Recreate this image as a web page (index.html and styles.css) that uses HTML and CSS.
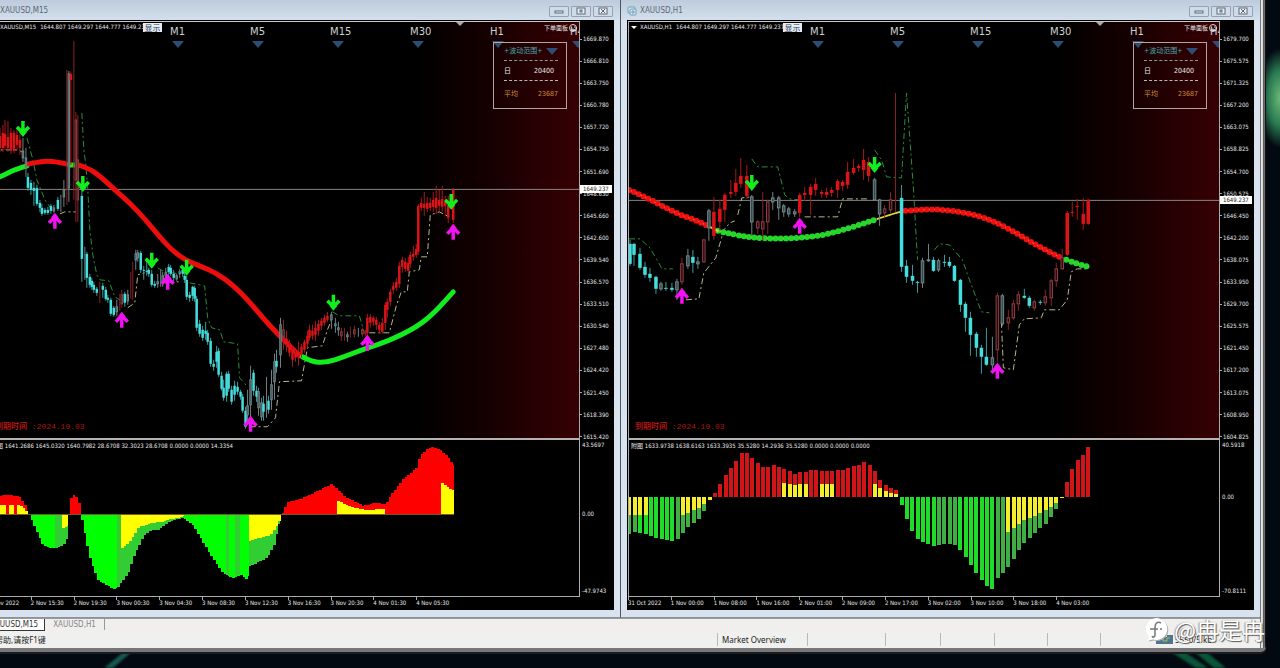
FILE: index.html
```html
<!DOCTYPE html>
<html lang="zh">
<head>
    <meta charset="UTF-8">
    <meta name="viewport" content="width=device-width, initial-scale=1.0">
    <title>XAUUSD</title>
    <link rel="stylesheet" href="styles.css">
</head>
<body>
    <svg class="streaks" viewBox="0 0 1280 18" preserveAspectRatio="none">
        <path d="M104 18L126 0h8L113 18z" fill="#17574f"/>
        <path d="M1168 0h14l26 18h-12zM1192 0h12l22 18h-12z" fill="#0a5538"/>
    </svg>
    <main class="terminal">
        <div class="workspace">
            <section class="window">
                <header class="titlebar">
                    <svg class="doc" viewBox="0 0 10 10"><rect x="1" y="1" width="7" height="6" rx="1"/><rect x="3" y="3" width="6" height="6" rx="1"/><path d="M4 6h4M6 4v4"/></svg>
                    <h2>XAUUSD,M15</h2>
                    <button aria-label="Minimize"><svg viewBox="0 0 10 8"><rect x="1" y="4" width="8" height="2"/></svg></button>
                    <button aria-label="Restore"><svg viewBox="0 0 10 8"><rect x="1" y="1" width="8" height="6"/><rect x="4" y="3" width="2" height="2"/></svg></button>
                    <button aria-label="Close"><svg viewBox="0 0 10 8"><rect x="1" y="1" width="8" height="6"/><path d="M3 2l4 4M7 2l-4 4"/></svg></button>
                </header>
                <div class="chart">
                    <div class="pane main">
                        <svg class="plot" id="m15" viewBox="-11 22 591 416" preserveAspectRatio="none"></svg>
                        <div class="quote"><i></i><span>XAUUSD,M15</span><span>1644.807 1649.297 1644.777 1649.237</span></div>
                        <button class="show">显示</button>
                        <div class="frames"><span>M1</span><span>M5</span><span>M15</span><span>M30</span><span>H1</span><span>H4</span></div>
                        <div class="shift"></div>
                        <div class="order">下单面板<svg viewBox="0 0 8 8"><circle cx="4" cy="4" r="3.5"/><path d="M2 3h1M5 3h1M2 6l2-1 2 1"/></svg></div>
                        <div class="range">
                            <p class="range-head">+波动范围+<b></b></p>
                            <p class="day"><span>日</span><span>20400</span></p>
                            <p class="avg"><span>平均</span><span>23687</span></p>
                        </div>
                        <p class="expire"><b>到期时间</b> :2024.10.03</p>
                    </div>
                    <div class="scale">
                        <span>1669.870</span><span>1666.810</span><span>1663.750</span><span>1660.780</span><span>1657.720</span><span>1654.750</span><span>1651.690</span><span>1648.630</span><span>1645.660</span><span>1642.600</span><span>1639.540</span><span>1636.570</span><span>1633.510</span><span>1630.540</span><span>1627.480</span><span>1624.420</span><span>1621.450</span><span>1618.390</span><span>1615.420</span>
                        <div class="price price-m15">1649.237</div>
                    </div>
                    <div class="pane sub">
                        <svg class="plot" id="m15sub" viewBox="-11 440 591 156" preserveAspectRatio="none"></svg>
                        <p class="values">附图 1641.2686 1645.0320 1640.7982 28.6708 32.3023 28.6708 0.0000 0.0000 14.3354</p>
                    </div>
                    <div class="subscale"><span>43.5697</span><span class="zero zero-m15">0.00</span><span>-47.9743</span></div>
                    <div class="times"><span>2 Nov 2022</span><span>2 Nov 15:30</span><span>2 Nov 19:30</span><span>3 Nov 00:30</span><span>3 Nov 04:30</span><span>3 Nov 08:30</span><span>3 Nov 12:30</span><span>3 Nov 16:30</span><span>3 Nov 20:30</span><span>4 Nov 01:30</span><span>4 Nov 05:30</span></div>
                </div>
            </section>

            <section class="window">
                <header class="titlebar">
                    <svg class="doc" viewBox="0 0 10 10"><rect x="1" y="1" width="7" height="6" rx="1"/><rect x="3" y="3" width="6" height="6" rx="1"/><path d="M4 6h4M6 4v4"/></svg>
                    <h2>XAUUSD,H1</h2>
                    <button aria-label="Minimize"><svg viewBox="0 0 10 8"><rect x="1" y="4" width="8" height="2"/></svg></button>
                    <button aria-label="Restore"><svg viewBox="0 0 10 8"><rect x="1" y="1" width="8" height="6"/><rect x="4" y="3" width="2" height="2"/></svg></button>
                    <button aria-label="Close"><svg viewBox="0 0 10 8"><rect x="1" y="1" width="8" height="6"/><path d="M3 2l4 4M7 2l-4 4"/></svg></button>
                </header>
                <div class="chart">
                    <div class="pane main">
                        <svg class="plot" id="h1" viewBox="629 22 591 416" preserveAspectRatio="none"></svg>
                        <div class="quote"><i></i><span>XAUUSD,H1</span><span>1644.807 1649.297 1644.777 1649.237</span></div>
                        <button class="show">显示</button>
                        <div class="frames"><span>M1</span><span>M5</span><span>M15</span><span>M30</span><span>H1</span><span>H4</span></div>
                        <div class="shift"></div>
                        <div class="order">下单面板<svg viewBox="0 0 8 8"><circle cx="4" cy="4" r="3.5"/><path d="M2 3h1M5 3h1M2 6l2-1 2 1"/></svg></div>
                        <div class="range">
                            <p class="range-head">+波动范围+<b></b></p>
                            <p class="day"><span>日</span><span>20400</span></p>
                            <p class="avg"><span>平均</span><span>23687</span></p>
                        </div>
                        <p class="expire"><b>到期时间</b> :2024.10.03</p>
                    </div>
                    <div class="scale">
                        <span>1679.700</span><span>1675.575</span><span>1671.325</span><span>1667.200</span><span>1663.075</span><span>1658.825</span><span>1654.700</span><span>1650.575</span><span>1646.450</span><span>1642.200</span><span>1638.075</span><span>1633.950</span><span>1629.700</span><span>1625.575</span><span>1621.450</span><span>1617.200</span><span>1613.075</span><span>1608.950</span><span>1604.825</span>
                        <div class="price price-h1">1649.237</div>
                    </div>
                    <div class="pane sub">
                        <svg class="plot" id="h1sub" viewBox="629 440 591 156" preserveAspectRatio="none"></svg>
                        <p class="values">附图 1633.9738 1638.6163 1633.3935 35.5280 14.2936 35.5280 0.0000 0.0000 0.0000</p>
                    </div>
                    <div class="subscale"><span>40.5918</span><span class="zero zero-h1">0.00</span><span>-70.8111</span></div>
                    <div class="times"><span>31 Oct 2022</span><span>1 Nov 00:00</span><span>1 Nov 08:00</span><span>1 Nov 16:00</span><span>2 Nov 01:00</span><span>2 Nov 09:00</span><span>2 Nov 17:00</span><span>3 Nov 02:00</span><span>3 Nov 10:00</span><span>3 Nov 18:00</span><span>4 Nov 03:00</span></div>
                </div>
            </section>
        </div>

        <nav class="tabs">
            <a class="active" href="#m15">XAUUSD,M15</a>
            <a href="#h1">XAUUSD,H1</a>
        </nav>
        <footer class="status">
            <span>帮助,请按F1键</span>
            <span>Market Overview</span>
            <span></span><span></span><span></span><span></span><span></span>
            <span class="net">
                <svg viewBox="0 0 17 10"><path d="M0 10V7h3V5h4V3h4V1h6v9z" fill="#4f7590"/><path d="M3 5h4v2h4V4h3" fill="none" stroke="#a8bd57" stroke-width="1"/></svg>
                5550/5 kb
            </span>
        </footer>
        <div class="watermark">
            <svg viewBox="0 0 24 24"><path d="M12 1a11 11 0 1 1-3 21.500l-5 1 1-4A11 11 0 0 1 12 1z" fill="#fff"/><path d="M17 6c-4-2-6 1-6 4v8c0 2-2 3-3 1M6 12h8" fill="none" stroke="#777" stroke-width="1.500"/><circle cx="17" cy="12" r="1" fill="#777"/></svg>
            <span>@冉是冉</span>
        </div>
    </main>
    <script src="chart.js"></script>
</body>
</html>
```

FILE: styles.css
```css
*{
    box-sizing: border-box;
}
body{
    margin: 0;
    min-height: 100vh;
    overflow: hidden;
    position: relative;
    font-family: "Noto Sans", "Noto Sans CJK SC", sans-serif;
    font-size: 8px;
    background: radial-gradient(ellipse 22px 50px at 100% 98px, #6cb878, #2a7a52 55%, transparent 100%), #020911;
}
p, h2{
    margin: 0;
}
.streaks{
    position: absolute;
    left: 0;
    bottom: 0;
    width: 100%;
    height: 18px;
    filter: blur(1px);
}
/* the terminal is pushed partly off the left side of the screen */
.terminal{
    position: relative;
    display: flex;
    flex-direction: column;
    height: calc(100vh - 16px);
    margin: 0 14px 0 -20px;
    padding-right: 6px;
    border-bottom: 4px solid #77777a;
    border-bottom-right-radius: 5px;
    background: linear-gradient(270deg, #151515 1px, #777 1px, #555 3px, #cfcfcf 3px, #eee 5px, #777 5px, #777 6px, #f0f0f0 6px);
    box-shadow: 0 2px 0 #1b1b20;
}
.workspace{
    flex: 1;
    display: grid;
    grid-template-columns: 1fr 1fr;
    min-height: 0;
}
.window{
    display: flex;
    flex-direction: column;
    min-width: 0;
    padding: 0 6px 7px 6px;
    border-left: 1px solid #4b5561;
    border-bottom: 1px solid #8a929b;
    background: #d9e3f0;
}
.titlebar{
    display: flex;
    align-items: center;
    gap: 2px;
    height: 20px;
    margin: 0 -6px;
    padding: 2px 7px 0 6px;
    background: linear-gradient(#bdcbdc, #d3dfec);
}
.titlebar h2{
    flex: 1;
    font: 8px/14px "DejaVu Sans Condensed", "DejaVu Sans", sans-serif;
    color: #5c6876;
}
.doc{
    width: 10px;
    height: 10px;
    margin-right: 1px;
    fill: #dcebf5;
    stroke: #6d9db8;
    stroke-width: 1;
}
.titlebar button{
    width: 20px;
    height: 11px;
    padding: 0 4px;
    border: 1px solid #94a3b4;
    border-radius: 1px;
    background: #cfdbe8;
    line-height: 0;
}
.titlebar button svg{
    width: 10px;
    height: 8px;
    fill: #e9eff5;
    stroke: #5f6a76;
}
.chart{
    flex: 1;
    display: grid;
    grid-template-columns: minmax(0, 1fr) 34px;
    grid-template-rows: 419fr 156fr 14px;
    min-height: 0;
    padding-left: 1px;
    background: #000;
    color: #e8e8e8;
    font: 6px/8px "DejaVu Sans Condensed", "DejaVu Sans", "Noto Sans CJK SC", sans-serif;
}
.pane{
    position: relative;
    overflow: hidden;
    border-left: 1px solid #aaa;
    border-right: 1px solid #aaa;
}
.main{
    margin-top: 1px;
    border-top: 1px solid #c9c9c9;
    border-bottom: 2px solid #b5b2b2;
    background: linear-gradient(90deg, #000 72%, #160001 85%, #260002 92%, #360003);
}
.plot{
    position: absolute;
    inset: 0;
    width: 100%;
    height: 100%;
}
.sub .plot{
    shape-rendering: crispEdges;
}
.quote{
    position: absolute;
    left: 2px;
    top: 1px;
    display: flex;
    align-items: center;
    gap: 4px;
    white-space: nowrap;
}
.quote i{
    border: 3px solid transparent;
    border-top-color: #fff;
    border-bottom: 0;
}
.quote span:first-of-type{
    margin-left: -1px;
}
.show{
    position: absolute;
    left: 154px;
    top: 1px;
    width: 19px;
    height: 9px;
    padding: 0;
    border: 0;
    background: #e8edf4;
    color: #26384c;
    font: 8px/9px "Noto Sans CJK SC", sans-serif;
}
.frames{
    position: absolute;
    left: 181px;
    top: 3px;
    display: grid;
    grid-template-columns: repeat(6, 80px);
    color: #d0d0d0;
    font: 10px/14px "DejaVu Sans", sans-serif;
}
.frames span::after, .range-head b{
    content: "";
    display: block;
    width: 0;
    margin: 2px 0 0 2px;
    border: 6px solid transparent;
    border-top: 7px solid #2d4d72;
    border-bottom: 0;
}
.shift{
    position: absolute;
    left: 467px;
    top: 0;
    border: 4px solid transparent;
    border-top-color: #aaa;
    border-bottom: 0;
}
.order{
    position: absolute;
    right: 2px;
    top: 2px;
    display: flex;
    align-items: center;
    gap: 1px;
}
.order svg{
    width: 8px;
    height: 8px;
    fill: none;
    stroke: #ddd;
    stroke-width: 1;
}
.range{
    position: absolute;
    right: 12px;
    top: 20px;
    width: 74px;
    height: 67px;
    padding: 3px 8px 0 10px;
    border: 1px solid #b3a3a5;
    font-size: 7px;
}
.range p{
    display: flex;
    justify-content: space-between;
    align-items: center;
}
.range .range-head{
    height: 15px;
    padding-bottom: 4px;
    color: #4aa6ad;
    white-space: nowrap;
    border-bottom: 1px dashed #9c9290;
}
.range-head b{
    margin: 0;
}
.range .day{
    height: 20px;
    padding-right: 4px;
    border-bottom: 1px dashed #c0b6b4;
}
.range .avg{
    height: 26px;
    color: #c98d3f;
}
.expire{
    position: absolute;
    left: 6px;
    bottom: 6px;
    color: #b01414;
    font: 8px/10px "Liberation Mono", "Noto Sans CJK SC", monospace;
}
.scale{
    position: relative;
    display: flex;
    flex-direction: column;
    justify-content: space-between;
    margin-bottom: -1px;
    padding-top: 15px;
}
.scale span{
    display: flex;
    align-items: center;
    gap: 1px;
}
.scale span::before{
    content: "";
    width: 2px;
    height: 1px;
    background: #aaa;
}
.price{
    position: absolute;
    left: 0;
    width: 32px;
    padding-left: 3px;
    background: #fff;
    color: #222;
}
.price-m15{
    top: 165px;
}
.price-h1{
    top: 176px;
}
.subscale{
    position: relative;
    display: flex;
    flex-direction: column;
    justify-content: space-between;
    padding: 1px 0 1px 2px;
}
.zero{
    position: absolute;
    left: 2px;
}
.zero-m15{
    top: 70px;
}
.zero-h1{
    top: 53px;
}
.times{
    display: grid;
    grid-template-columns: repeat(11, 1fr);
    padding-right: 121px;
    border-top: 1px solid #aaa;
    line-height: 12px;
    white-space: nowrap;
}
.times span::before{
    content: "";
    position: absolute;
    width: 1px;
    height: 3px;
    background: #aaa;
}
.values{
    position: absolute;
    left: 2px;
    top: 2px;
    white-space: nowrap;
}
.tabs{
    display: flex;
    height: 13px;
    padding-left: 4px;
    border-top: 1px solid #999;
    background: #f0efed;
    font: 8px/12px "DejaVu Sans Condensed", "DejaVu Sans", sans-serif;
}
.tabs a{
    padding: 0 8px;
    color: #85858a;
    text-decoration: none;
    border-right: 1px solid #999;
    height: 11px;
}
.tabs .active{
    padding: 0 6px;
    height: 12px;
    background: #fff;
    color: #333;
    border-right: 1px solid #333;
    border-bottom: 1px solid #333;
}
.status{
    display: grid;
    grid-template-columns: 1fr 90px 78px 55px 54px 53px 53px 160px;
    height: 17px;
    padding: 2px 0;
    background: #f0f0ef;
    color: #222;
    line-height: 13px;
}
.status span{
    padding-left: 4px;
    border-left: 1px solid #b9b9b9;
}
.status span:first-child{
    padding-left: 14px;
    border-color: transparent;
}
.status .net{
    display: flex;
    gap: 2px;
    padding-left: 55px;
}
.net svg{
    width: 17px;
    height: 10px;
    margin-top: 1px;
}
.watermark{
    position: absolute;
    right: 1px;
    bottom: 0;
    display: flex;
    align-items: center;
    gap: 6px;
    color: #fff;
    font: 23px/38px "Noto Sans CJK SC", sans-serif;
    text-shadow: 1px 1px 1px #555, -1px 0 1px #999;
}
.watermark svg{
    width: 24px;
    height: 24px;
    filter: drop-shadow(1px 1px 0 #aaa);
}
```

FILE: chart.js
```javascript
var NS = "http://www.w3.org/2000/svg"

function add(svg, tag, attrs){
    var el = document.createElementNS(NS, tag)
    for(var k in attrs) el.setAttribute(k, attrs[k])
    svg.append(el)
}
function nums(s){
    return s.trim().split(/\s+/).map(p => p.split(",").map(Number))
}
function smooth(s){
    var p = nums(s)
    var d = "M" + p[0]
    for(var i=1;i<p.length-1;i++){
        d += "Q" + p[i] + " " + (p[i][0]+p[i+1][0])/2 + "," + (p[i][1]+p[i+1][1])/2
    }
    return d + "L" + p[p.length-1]
}
function rect(svg, x, y, w, h, fill){
    add(svg, "rect", {x:x, y:y, width:w, height:h, fill:fill})
}
function average(svg, color, s, width){
    add(svg, "path", {d:smooth(s), fill:"none", stroke:color, "stroke-width":width, "stroke-linecap":"round"})
}
function beads(svg, color, s){
    add(svg, "path", {d:smooth(s), fill:"none", stroke:color, "stroke-width":6, "stroke-linecap":"round", "stroke-dasharray":"0 5.3"})
    add(svg, "path", {d:smooth(s), fill:"none", stroke:"#e8a03a", "stroke-width":1, "stroke-dasharray":"1 4.3", "stroke-dashoffset":"-2"})
}
function trail(svg, color, s){
    s.split("|").forEach(part => {
        add(svg, "polyline", {points:part.trim(), fill:"none", stroke:color, "stroke-width":1, "stroke-dasharray":"6 3 2 3"})
    })
}
function down(svg, s){
    nums(s).forEach(p => {
        add(svg, "path", {d:"M-6-2L0 4L6-2M0-8V5", transform:"translate(" + p + ")", fill:"none", stroke:"#12ee1d", "stroke-width":3.5})
        add(svg, "path", {d:"M-4 3h8L0 8z", transform:"translate(" + p + ")", fill:"#12ee1d"})
    })
}
function up(svg, s){
    nums(s).forEach(p => {
        add(svg, "path", {d:"M-6 2L0-4L6 2M0 8V-5", transform:"translate(" + p + ")", fill:"none", stroke:"#f012f0", "stroke-width":3.5})
        add(svg, "path", {d:"M-4-3h8L0-8z", transform:"translate(" + p + ")", fill:"#f012f0"})
    })
}

var colors = {r:"#dc1418", c:"#45dede", g:"#6f8286", d:"#8a2226"}

// each candle: x, high, body top, body bottom, low, colour
function candles(svg, s, w){
    s.trim().split(/\s+/).forEach(item => {
        var v = item.split(",")
        var c = v[5]
        var n = v.slice(0, 5).map(Number)
        rect(svg, n[0]-0.5, n[1], 1, n[4]-n[1], c=="c" ? "#3c9a9a" : c=="r" ? "#a8181c" : colors[c])
        if(c=="r" || c=="c"){
            rect(svg, n[0]-w/2, n[2], w, Math.max(1, n[3]-n[2]), colors[c])
        }else if(n[3]>n[2]){
            add(svg, "rect", {x:n[0]-w/2+0.5, y:n[2], width:w-1, height:n[3]-n[2], fill:c=="g" ? "#35484b" : "#30090c", stroke:c=="g" ? "#71878a" : "#8a4246", "stroke-width":1})
        }
    })
}

// ---- M15 ----
var m = document.querySelector("#m15")
rect(m, -11, 189, 591, 1, "#858585")
trail(m, "#2a8f35", `27,138 33,160 37,180 45,200 50,207 | 82,113 84,150 86,165 88,190 90,230 93,255 97,275 100,280 109,281 115,297 120,300 |
    158,268 165,272 180,274 | 190,283 205,286 208,318 212,328 220,330 224,342 238,344 240,378 247,386 | 333,312 340,316 360,316 365,333`)
trail(m, "#b5b98a", `-8,150 18,150 22,152 | 60,214 65,212 76,212 | 128,308 135,303 138,275 145,273 | 168,282 180,282 |
    250,427 268,427 276,418 280,382 302,381 308,348 323,346 328,330 333,318 | 370,333 390,333 397,306 402,292 408,292 410,272 420,270 422,257 428,257 431,215 440,212 450,217`)
average(m, "#12ee1d", "-11,182 0,177 14,170 27,166", 5)
average(m, "#ee0d0d", "29,164 38,162 50,161 62,163 70,165", 5)
average(m, "#ee0d0d", "78,165 88,168 100,176 115,190 130,203 145,219 160,237 172,250 185,260 200,266 216,273 232,284 250,302 265,320 278,334 300,356", 5)
average(m, "#12ee1d", "70,165 76,165", 5)
average(m, "#12ee1d", "303,357 312,362 326,363 345,357 365,349 390,341 418,327 435,313 454,292", 5)
candles(m, `
    0,128,136,148,152,r 3,125,133,148,152,r 5,120,134,146,150,r 8,121,137,148,152,r 11,128,133,150,154,r 14,130,133,151,153,r 17,128,135,145,150,r
    20,134,140,148,155,r 23,138,151,158,162,g 26,148,158,168,177,g 28,173,177,188,191,c 31,180,183,190,195,c 34,182,188,191,206,c
    37,185,188,204,206,c 40,200,203,208,212,c 42,204,208,214,216,c 45,208,210,213,215,c 48,207,210,213,215,c 51,204,206,211,214,c
    54,205,208,211,213,g 58,197,200,209,211,c 61,195,203,203,212,g 64,180,190,197,207,g 67,70,190,190,205,d 69,71,74,188,202,g
    71,72,74,80,165,r 74,41,78,78,200,d 76,112,120,180,222,d 78,115,160,200,222,d 82,190,196,259,282,c 85,247,258,258,280,g
    87,252,254,278,288,c 90,274,277,285,288,c 92,278,281,287,290,c 94,282,285,290,293,c 97,287,289,293,296,c 100,282,292,292,303,d
    103,283,286,290,298,c 106,287,290,299,301,c 108,295,298,300,303,c 111,298,300,314,316,c 114,306,308,315,317,c 117,300,307,312,316,g
    120,294,305,305,311,d 122,290,295,304,308,d 125,292,294,303,307,c 128,290,295,301,305,g 131,272,288,288,299,d 133,262,275,275,300,d
    136,250,254,260,270,g 138,250,253,258,262,g 141,251,253,270,273,c 144,266,270,270,280,c 147,258,271,272,276,c 149,268,270,274,277,c
    152,270,274,285,287,c 155,281,284,286,288,c 158,274,282,284,288,g 161,270,280,280,287,g 163,272,276,283,287,g 166,268,273,276,284,g
    169,264,267,272,275,c 171,265,268,274,276,c 174,270,274,278,281,c 177,274,276,279,281,g 180,269,272,274,278,g 183,267,270,274,277,c
    185,272,276,280,283,c 187,276,280,297,300,c 190,292,295,298,302,c 193,286,287,296,301,c 195,286,288,299,302,c 197,296,299,328,331,c
    200,320,324,334,337,c 203,326,330,338,341,c 206,322,331,334,340,c 208,330,333,342,345,c 211,338,341,364,367,c 214,360,364,367,371,c
    217,346,352,362,368,c 219,348,351,375,377,c 222,372,376,389,391,c 224,380,388,398,401,c 227,372,374,396,402,c 229,371,374,389,392,c
    232,386,390,402,405,c 235,381,386,395,401,c 238,382,387,392,395,c 241,390,392,397,400,c 243,394,397,411,413,c 246,407,411,427,429,c
    248,390,406,415,424,g 251,366,380,405,420,g 254,370,373,391,396,c 257,386,391,397,402,c 259,388,392,408,416,g 262,398,403,417,421,g
    264,396,404,412,421,c 267,377,400,400,418,g 269,396,401,410,414,c 272,370,385,400,410,g 275,354,362,382,400,g 277,350,361,367,373,c
    281,318,325,355,368,g 284,320,330,337,350,d 287,331,339,344,352,r 290,340,345,353,357,r 293,346,350,360,367,r 296,350,353,358,362,r
    299,342,352,356,366,r 302,344,347,354,358,r 305,340,342,350,353,r 308,331,336,344,348,r 310,325,330,338,341,r 313,325,331,336,340,r
    316,321,328,335,341,r 319,320,324,331,336,r 322,318,321,326,330,r 325,315,318,323,326,r 328,312,316,320,322,r 332,312,315,320,329,g
    336,318,324,326,333,g 339,322,328,330,336,g 342,328,332,336,341,d 345,328,334,334,341,d 348,332,335,337,342,g 351,327,333,333,338,d
    355,326,330,334,338,d 359,328,332,332,337,g 363,328,330,334,337,d 366,330,333,333,336,r 368,314,318,333,336,r 371,314,317,323,328,r
    374,316,318,322,326,r 377,317,320,325,330,r 380,322,325,330,334,r 383,318,323,332,334,r 386,302,305,323,330,r 388,299,302,310,318,r
    391,289,292,302,306,r 394,282,286,290,294,r 397,278,282,288,291,r 400,262,266,284,288,r 403,257,260,267,273,r 406,258,262,269,272,r
    409,257,263,271,273,r 411,252,255,264,268,r 414,246,254,257,261,r 417,244,249,255,258,r 419,204,206,252,255,r 422,198,203,208,211,r
    425,192,204,208,216,r 428,197,203,209,212,r 431,198,203,208,211,r 434,192,200,207,212,r 437,186,198,208,214,r 440,190,200,206,211,r
    443,186,199,207,212,r 446,196,202,206,216,r 449,196,206,218,223,r 454,188,190,220,223,r`, 2.5)
down(m, "23,129 83,184 152,261 187,268 334,303 452,202")
up(m, "55,221 122,320 168,282 251,424 368,343 454,232")

// ---- H1 ----
var h = document.querySelector("#h1")
rect(h, 629, 200, 591, 1, "#858585")
trail(h, "#2a8f35", `629,239 640,239 650,248 657,260 662,269 673,269 | 752,159 758,167 778,167 785,195 790,199 800,200 |
    875,150 882,160 887,177 902,178 907,93 914,190 918,260 | 935,250 940,244 950,245 963,260 970,280 982,312 990,313`)
trail(h, "#b5b98a", `686,300 699,299 704,273 716,258 724,230 730,223 735,221 | 738,215 742,198 752,197 | 805,217 838,217 843,199 870,199 |
    1002,322 1004,368 1014,370 1020,325 1025,319 1042,318 1045,310 1060,310 1068,300 1072,272 1078,269 1090,269`)
beads(h, "#ee1010", "629,190 645,197 660,205 680,215 695,220 708,226")
beads(h, "#1fd92a", "718,231 735,235 755,238 780,239 800,238 820,236 840,231 860,225 878,219")
average(h, "#e8d23a", "708,226 718,231", 2)
average(h, "#e8d23a", "878,219 890,215 904,211", 2)
beads(h, "#ee1010", "906,211 930,209 955,211 980,216 1000,224 1020,235 1040,247 1062,258")
beads(h, "#1fd92a", "1067,260 1078,264 1090,267")
candles(h, `
    630,240,244,264,266,c 634,243,244,255,266,c 640,248,254,268,270,c 645,262,267,275,278,c 650,268,274,278,282,c 656,276,277,289,294,c
    661,282,284,289,291,g 666,282,288,289,291,c 672,283,288,290,292,c 677,279,282,290,300,g 682,258,264,282,285,d 688,249,256,266,269,g
    693,250,257,263,273,c 698,257,262,264,269,g 704,239,240,262,263,d 709,209,211,228,241,g 714,197,212,236,240,r 720,200,209,222,230,r
    725,193,195,210,222,r 731,180,192,194,198,r 736,169,183,192,196,r 741,158,176,184,188,r 747,165,176,196,199,r 752,195,197,222,236,g
    758,220,222,228,234,d 763,192,222,229,240,d 768,200,202,222,234,d 773,192,198,202,210,g 779,196,198,208,220,g 784,204,206,212,217,g
    789,207,209,214,217,g 795,209,212,214,217,g 800,193,195,213,217,r 805,187,193,195,201,r 811,184,187,195,215,r 816,178,184,190,196,r
    822,190,192,194,198,r 827,188,192,195,198,r 832,187,190,193,197,r 838,179,181,190,198,r 843,180,182,186,191,r 848,162,172,185,189,r
    854,159,168,173,175,r 859,164,166,168,172,r 864,149,160,170,180,r 869,157,162,176,182,r 875,178,180,200,201,g 880,199,200,214,226,g
    885,205,209,213,217,d 891,192,200,210,213,d 896,93,199,199,212,d 902,185,198,267,272,c 907,260,266,277,283,c 913,265,276,281,285,c
    918,281,282,283,293,c 923,258,261,283,288,g 929,244,260,261,262,g 934,257,260,271,272,c 939,259,261,270,272,g 945,255,262,263,267,c
    950,257,262,266,268,c 955,265,266,281,282,c 961,279,280,305,312,c 966,302,304,318,332,c 971,312,318,335,356,c 977,332,334,348,357,c
    982,345,348,357,374,c 987,328,357,365,366,c 993,337,358,365,370,g 998,293,296,350,362,d 1003,294,296,324,326,g 1009,310,318,323,330,d
    1014,300,304,318,320,d 1019,291,295,304,311,d 1025,289,296,298,299,c 1030,296,298,306,308,c 1035,300,302,308,311,d 1041,300,302,303,305,c
    1046,290,297,303,306,d 1052,279,281,298,306,d 1057,263,269,281,287,d 1063,249,258,269,270,d 1068,211,213,255,256,r 1073,202,212,213,217,r
    1078,199,206,206,220,r 1084,198,214,224,230,r 1089,199,200,224,225,r`, 3.5)
down(h, "752,183 875,165")
up(h, "682,296 800,226 998,371")

// ---- M15 histogram ----
var ms = document.querySelector("#m15sub")
function level(p, x){
    for(var i=1;i<p.length;i++){
        if(x<=p[i][0]){
            var t = (x-p[i-1][0])/(p[i][0]-p[i-1][0])
            return Math.round(p[i-1][1]+t*(p[i][1]-p[i-1][1]))
        }
    }
}
function area(color, s){
    var p = nums(s)
    var end = p[p.length-1][0]
    for(var x=p[0][0]; x<end; x+=2.68){
        var y = level(p, x)
        rect(ms, x, Math.min(y, 514), Math.min(2.9, end-x), Math.abs(y-514), color)
    }
}
area("#f00", "-11,497 5,495 18,496 24,505 28,514")
area("#ff0", "-11,505 6,505")
area("#ff0", "9,505 14,505")
area("#ff0", "17,505 20,506 28,514")
area("#0f0", "28,514 35,530 42,545 50,548 55,548")
area("#32cd32", "55,548 62,546 66,538 68,536")
area("#ff0", "62,528 68,526")
area("#f00", "70,498 74,494 78,503 81,513")
area("#0f0", "81,520 85,540 90,562 97,580 105,585 113,589 117,587")
area("#32cd32", "117,587 128,572 133,556 142,537 150,530 158,530 168,522 175,519 184,518")
area("#ff0", "121,548 128,543 138,527 150,523 160,522 170,519 185,516")
area("#0f0", "184,519 193,526 200,538 210,555 222,573 232,578 240,575 246,579 249,575")
area("#32cd32", "226,575 229,576")
area("#32cd32", "235,576 240,575")
area("#32cd32", "249,566 258,562 267,557 273,545 280,518")
area("#ff0", "249,541 258,538 270,535 276,526 281,515")
area("#f00", "282,513 287,502 300,499 315,492 331,484 345,497 363,506 375,503 385,504 392,493 402,480 416,468 420,455 427,449 432,447 440,450 448,458 453,465 455,466")
area("#ff0", "338,501 350,507 365,510 386,509")
area("#ff0", "442,483 450,489 455,490")
rect(ms, -11, 514, 466, 1, "#7a5a20")

// ---- H1 histogram ----
var hs = document.querySelector("#h1sub")
var bars = [534,532,533,534,536,538,539,540,541,539,533,527,523,519,511,500,
    493,484,475,468,461,453,453,458,463,467,467,465,467,469,471,474,472,472,470,470,471,471,471,470,470,468,466,465,462,465,471,480,485,488,490,
    505,519,531,539,542,544,546,545,544,544,545,550,557,565,573,580,586,589,578,573,567,559,550,543,538,533,528,524,517,509,498,
    482,469,460,455,447]
var yellow = {0:515,1:515,2:515,3:515,10:515,11:513,12:510,13:508,14:504,15:500,29:483,30:484,31:485,32:484,33:484,36:484,37:484,38:484,
    46:484,47:488,48:491,49:493,50:494,71:532,72:528,73:524,74:520,75:518,76:516,77:513,78:510,79:507,80:503,81:498}
for(let i=0;i<bars.length;i++){
    var x = 627.5 + i*5.345
    var dull = i<2 || (i>8 && i<16) || (i>57 && i<62) || i>68
    var color = bars[i]<497 ? "#d01418" : dull ? "#3fae43" : "#1fdc28"
    rect(hs, x, Math.min(bars[i], 497), 4, Math.abs(bars[i]-497), color)
    if(yellow[i]) rect(hs, x, Math.min(yellow[i], 497), 4, Math.abs(yellow[i]-497), "#f5ee2c")
}
```
